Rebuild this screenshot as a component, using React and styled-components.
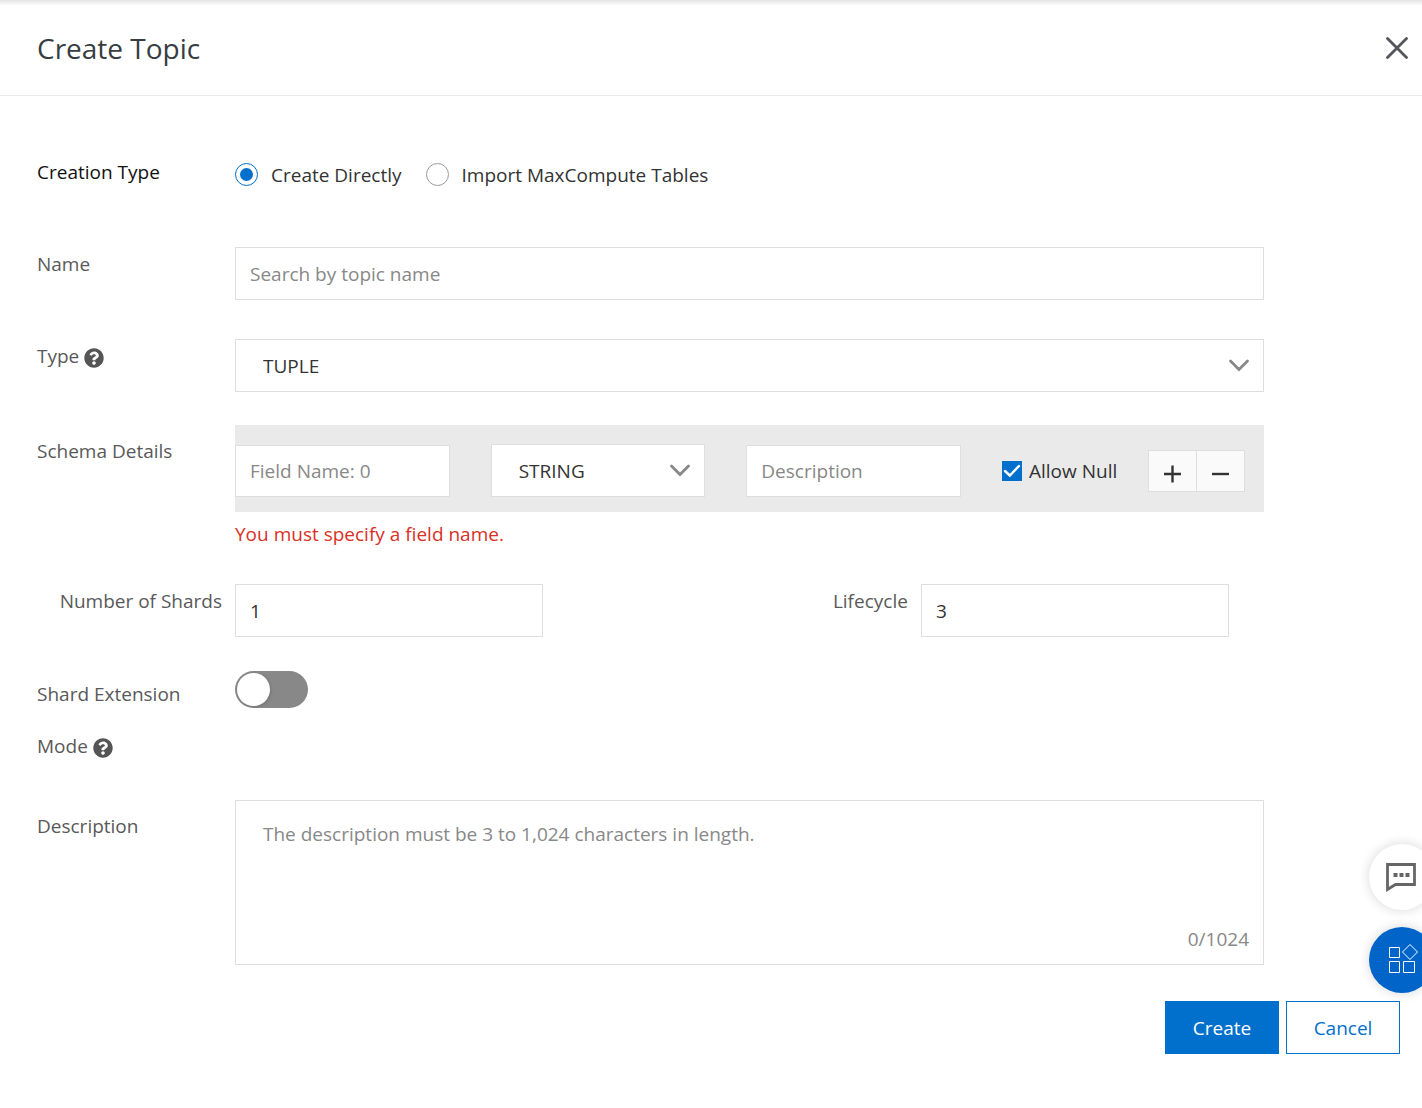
import React, { useState } from "react";
import styled, { createGlobalStyle, css } from "styled-components";
import { FaQuestionCircle } from "react-icons/fa";

const GlobalStyle = createGlobalStyle`
  * {
    box-sizing: border-box;
  }

  body {
    margin: 0;
    background: #fff;
  }

  body, button, input, select, textarea {
    font-family: "Segoe UI", "Open Sans", sans-serif;
    font-size: 19px;
  }
`;

const Dialog = styled.main`
  min-height: 100vh;
  color: #333;
  background: linear-gradient(#e4e4e4, #fff 6px);
`;

const Header = styled.header`
  display: flex;
  align-items: center;
  justify-content: space-between;
  height: 96px;
  padding: 0 14px 0 37px;
  border-bottom: 1px solid #ebebeb;
`;

const Title = styled.h1`
  margin: 0;
  color: #373d41;
  font-size: 28px;
  font-weight: 400;
`;

const CloseButton = styled.button`
  display: flex;
  padding: 0;
  border: none;
  background: none;
  cursor: pointer;
`;

const Form = styled.form`
  padding: 59px 0 40px;
`;

const Fields = styled.div`
  padding: 0 158px 0 37px;
`;

const Row = styled.div`
  display: grid;
  grid-template-columns: 198px minmax(0, 1fr);
  align-items: start;
  min-height: 53px;
  margin-bottom: ${(props) => props.$gap}px;
`;

const labelStyles = css`
  color: ${(props) => (props.$dark ? "#111" : "#595959")};
  line-height: ${(props) => (props.$tall ? 52 : 34)}px;

  svg {
    width: 20px;
    height: 20px;
    margin-left: 5px;
    color: #555;
    vertical-align: -5px;
  }
`;

const Label = styled.label`
  ${labelStyles}
`;

const LabelText = styled.span`
  ${labelStyles}
`;

const SideLabel = styled(Label)`
  justify-self: end;
  padding-right: 13px;
`;

const RadioGroup = styled.div`
  display: flex;
  gap: 24px;
  height: 39px;
`;

const RadioLabel = styled.label`
  display: flex;
  align-items: center;
  gap: 13px;
`;

const Radio = styled.input`
  appearance: none;
  width: 23px;
  height: 23px;
  margin: 0;
  padding: 4px;
  border: 1px solid #999;
  border-radius: 50%;
  background: #fff content-box;

  &:checked {
    border-color: #0070cc;
    background-color: #0070cc;
  }
`;

const Input = styled.input`
  width: 100%;
  min-width: 0;
  height: 53px;
  padding: 0 14px;
  border: 1px solid #dedede;
  border-radius: 0;
  background: #fff;
  color: #333;
  outline: none;

  &::placeholder {
    color: #888;
    opacity: 1;
  }
`;

const SelectBox = styled.div`
  display: grid;
  align-items: center;

  & > * {
    grid-area: 1 / 1;
  }

  svg {
    justify-self: end;
    margin-right: 14px;
    pointer-events: none;
  }
`;

const Select = styled.select`
  appearance: none;
  width: 100%;
  height: 53px;
  padding: 0 40px 0 27px;
  border: 1px solid #dedede;
  border-radius: 0;
  background: #fff;
  color: #333;
  outline: none;
`;

const Schema = styled.div`
  display: grid;
  grid-template-columns: repeat(3, minmax(0, 1fr)) 243px;
  align-items: end;
  gap: 41px;
  height: 87px;
  padding: 0 19px 15px 0;
  background: #eaeaea;

  & > input {
    height: 52px;
  }
`;

const SchemaActions = styled.div`
  display: flex;
  align-items: center;
  justify-content: space-between;
  height: 52px;
`;

const CheckLabel = styled.label`
  display: flex;
  align-items: center;
  gap: 7px;
  white-space: nowrap;
`;

const CheckBox = styled.span`
  display: grid;

  & > * {
    grid-area: 1 / 1;
  }

  svg {
    pointer-events: none;
  }
`;

const Check = styled.input`
  appearance: none;
  width: 20px;
  height: 20px;
  margin: 0;
  border: 1px solid #999;
  background: #fff;

  &:checked {
    border-color: #0070cc;
    background: #0070cc;
  }
`;

const ButtonPair = styled.div`
  display: flex;
  border: 1px solid #dedede;
`;

const SmallButton = styled.button`
  display: flex;
  align-items: center;
  justify-content: center;
  width: 47px;
  height: 40px;
  padding: 6px 0 0;
  border: none;
  background: #fafafa;

  & + & {
    width: 48px;
    border-left: 1px solid #dedede;
  }
`;

const ErrorText = styled.p`
  margin: 0;
  color: #d93026;
  line-height: 44px;
`;

const Pair = styled.div`
  display: grid;
  grid-template-columns: 31% minmax(0, 1fr) 31%;
  padding-right: 35px;
`;

const Switch = styled.input`
  appearance: none;
  width: 73px;
  height: 37px;
  margin: 3px 0 0;
  padding: 2px;
  border-radius: 19px;
  background: #888;

  &::before {
    content: "";
    display: block;
    width: 33px;
    height: 33px;
    border-radius: 50%;
    background: #fff;
    box-shadow: 1px 1px 3px rgba(0, 0, 0, 0.15);
  }

  &:checked {
    background: #0070cc;
  }

  &:checked::before {
    margin-left: auto;
  }
`;

const TextBox = styled.div`
  display: flex;
  flex-direction: column;
  height: 165px;
  border: 1px solid #dedede;
`;

const Textarea = styled.textarea`
  flex: 1;
  padding: 20px 27px 0;
  border: none;
  background: none;
  color: #333;
  line-height: 26px;
  outline: none;
  resize: none;

  &::placeholder {
    color: #888;
    opacity: 1;
  }
`;

const Counter = styled.span`
  align-self: flex-end;
  padding: 0 14px 12px;
  color: #888;
  line-height: 26px;
`;

const Footer = styled.footer`
  display: flex;
  justify-content: flex-end;
  gap: 7px;
  padding-right: 22px;
`;

const Button = styled.button`
  width: 114px;
  height: 53px;
  border: 1px solid #0070cc;
  background: ${(props) => (props.$primary ? "#0070cc" : "#fff")};
  color: ${(props) => (props.$primary ? "#fff" : "#0070cc")};
  font-weight: ${(props) => (props.$primary ? 500 : 400)};
  cursor: pointer;
`;

const FloatingBar = styled.aside`
  position: fixed;
  right: -13px;
  bottom: 115px;
  display: flex;
  flex-direction: column;
  gap: 17px;
`;

const RoundButton = styled.button`
  width: 66px;
  height: 66px;
  padding: 0;
  border: none;
  border-radius: 50%;
  background: ${(props) => (props.$blue ? "#0064c8" : "#fff")};
  box-shadow: 0 0 12px rgba(0, 0, 0, 0.16);
  cursor: pointer;

  svg {
    display: block;
  }
`;

const Chevron = () => (
  <svg width="22" height="14" viewBox="0 0 22 14" fill="none">
    <path
      d="M2.5 2 L11 10.5 L19.5 2"
      stroke="#888"
      strokeWidth="2.8"
      strokeLinecap="round"
    />
  </svg>
);

const App = () => {
  const [source, setSource] = useState("direct");
  const [description, setDescription] = useState("");

  return (
    <Dialog>
      <GlobalStyle />
      <Header>
        <Title>Create Topic</Title>
        <CloseButton type="button" aria-label="Close">
          <svg width="22" height="22" viewBox="0 0 22 22" fill="none">
            <path
              d="M1.5 1.5 L20.5 20.5 M20.5 1.5 L1.5 20.5"
              stroke="#54555b"
              strokeWidth="2.8"
              strokeLinecap="round"
            />
          </svg>
        </CloseButton>
      </Header>
      <Form onSubmit={(e) => e.preventDefault()}>
        <Fields>
          <Row $gap={39}>
            <LabelText $dark>Creation Type</LabelText>
            <RadioGroup>
              <RadioLabel>
                <Radio
                  type="radio"
                  name="source"
                  checked={source === "direct"}
                  onChange={() => setSource("direct")}
                />
                Create Directly
              </RadioLabel>
              <RadioLabel>
                <Radio
                  type="radio"
                  name="source"
                  checked={source === "import"}
                  onChange={() => setSource("import")}
                />
                Import MaxCompute Tables
              </RadioLabel>
            </RadioGroup>
          </Row>

          <Row $gap={39}>
            <Label htmlFor="name">Name</Label>
            <Input id="name" type="text" placeholder="Search by topic name" />
          </Row>

          <Row $gap={33}>
            <Label htmlFor="type">
              Type
              <FaQuestionCircle />
            </Label>
            <SelectBox>
              <Select id="type">
                <option>TUPLE</option>
                <option>BLOB</option>
              </Select>
              <Chevron />
            </SelectBox>
          </Row>

          <Row $gap={28}>
            <LabelText $tall>Schema Details</LabelText>
            <div>
              <Schema>
                <Input
                  type="text"
                  aria-label="Field Name"
                  placeholder="Field Name: 0"
                />
                <SelectBox>
                  <Select aria-label="Field Type">
                    <option>STRING</option>
                    <option>BIGINT</option>
                  </Select>
                  <Chevron />
                </SelectBox>
                <Input
                  type="text"
                  aria-label="Field Description"
                  placeholder="Description"
                />
                <SchemaActions>
                  <CheckLabel>
                    <CheckBox>
                      <Check type="checkbox" defaultChecked />
                      <svg width="20" height="20" viewBox="0 0 20 20" fill="none">
                        <path
                          d="M3 10 L7.8 14.5 L17 5"
                          stroke="#fff"
                          strokeWidth="2.4"
                          strokeLinecap="round"
                        />
                      </svg>
                    </CheckBox>
                    Allow Null
                  </CheckLabel>
                  <ButtonPair>
                    <SmallButton type="button" aria-label="Add field">
                      <svg width="18" height="18" viewBox="0 0 18 18">
                        <path d="M0 9 H17 M8.5 0.5 V17.5" stroke="#333" strokeWidth="2.4" />
                      </svg>
                    </SmallButton>
                    <SmallButton type="button" aria-label="Remove field">
                      <svg width="18" height="18" viewBox="0 0 18 18">
                        <path d="M0 9 H17" stroke="#333" strokeWidth="2.4" />
                      </svg>
                    </SmallButton>
                  </ButtonPair>
                </SchemaActions>
              </Schema>
              <ErrorText>You must specify a field name.</ErrorText>
            </div>
          </Row>

          <Row $gap={31}>
            <SideLabel htmlFor="shards">Number of Shards</SideLabel>
            <Pair>
              <Input id="shards" type="text" defaultValue="1" />
              <SideLabel htmlFor="lifecycle">Lifecycle</SideLabel>
              <Input id="lifecycle" type="text" defaultValue="3" />
            </Pair>
          </Row>

          <Row $gap={28}>
            <Label htmlFor="extension" $tall>
              Shard Extension
              <br />
              Mode
              <FaQuestionCircle />
            </Label>
            <Switch id="extension" type="checkbox" role="switch" />
          </Row>

          <Row $gap={36}>
            <Label htmlFor="description" $tall>
              Description
            </Label>
            <TextBox>
              <Textarea
                id="description"
                placeholder="The description must be 3 to 1,024 characters in length."
                maxLength={1024}
                value={description}
                onChange={(e) => setDescription(e.target.value)}
              />
              <Counter>{`${description.length}/1024`}</Counter>
            </TextBox>
          </Row>
        </Fields>
        <Footer>
          <Button type="submit" $primary>
            Create
          </Button>
          <Button type="button">Cancel</Button>
        </Footer>
      </Form>

      <FloatingBar>
        <RoundButton type="button" aria-label="Feedback">
          <svg width="66" height="66" viewBox="0 0 66 66" fill="none">
            <path
              d="M18.5 20.5 H45.5 V40.5 H26.5 L18.5 45.5 Z"
              stroke="#666"
              strokeWidth="2.8"
            />
            <path d="M24.5 31 H41" stroke="#666" strokeWidth="4" strokeDasharray="4 2" />
          </svg>
        </RoundButton>
        <RoundButton type="button" aria-label="Products" $blue>
          <svg width="66" height="66" viewBox="0 0 66 66" fill="none" stroke="#fff">
            <path d="M20.5 20.5 H30.5 V30.5 H20.5 Z" />
            <path d="M20.5 34.5 H30.5 V45.5 H20.5 Z" />
            <path d="M34.5 34.5 H45.5 V45.5 H34.5 Z" />
            <path d="M41 17.5 L48.5 25 L41 32.5 L33.5 25 Z" />
          </svg>
        </RoundButton>
      </FloatingBar>
    </Dialog>
  );
};

export default App;
